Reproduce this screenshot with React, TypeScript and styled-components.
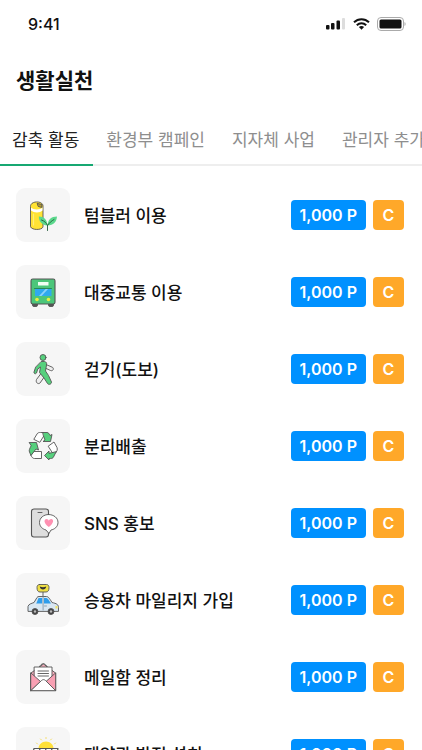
import React, { useState } from "react";
import styled, { createGlobalStyle } from "styled-components";

const GlobalStyle = createGlobalStyle`
  * { box-sizing: border-box; }
  html { overflow-x: hidden; scrollbar-width: none; }
  body {
    margin: 0;
    background: #fff;
    color: #111;
    font-family: Inter, "Noto Sans CJK KR", sans-serif;
  }
  button { font: inherit; border: 0; background: none; cursor: pointer; }
`;

const Screen = styled.div`
  width: 100%;
  overflow: hidden;
`;

const StatusBar = styled.div`
  display: flex;
  align-items: center;
  justify-content: space-between;
  height: 48px;
  padding: 0 16px 0 28px;
`;

const Clock = styled.time`
  font-size: 16px;
  line-height: 24px;
  font-weight: 500;
`;

const StatusIcons = styled.div`
  display: flex;
  align-items: center;
  gap: 7px;
`;

const Title = styled.h1`
  margin: 0;
  padding: 2px 16px 0;
  font-size: 21px;
  line-height: 62px;
  font-weight: 700;
`;

const TabList = styled.div`
  display: flex;
  height: 54px;
  box-shadow: inset 0 -2px #eee;
  overflow-x: auto;
  scrollbar-width: none;
`;

const Tab = styled.button<{ $active: boolean }>`
  flex: none;
  padding: 4px 14px 0 13px;
  border-bottom: 2px solid ${(p) => (p.$active ? "#16a872" : "transparent")};
  color: ${(p) => (p.$active ? "#222" : "#8e8e8e")};
  font-size: 17px;
  line-height: 24px;
  font-weight: 400;
  white-space: nowrap;

  &:first-child { padding-left: 12px; }
`;

const List = styled.ul`
  display: flex;
  flex-direction: column;
  gap: 23px;
  margin: 0;
  padding: 22px 18px 22px 16px;
  list-style: none;
`;

const Row = styled.li`
  display: flex;
  align-items: center;
`;

const Tile = styled.div`
  display: grid;
  place-items: center;
  flex: none;
  width: 54px;
  height: 54px;
  border-radius: 9px;
  background: #f6f6f6;
`;

const Name = styled.span`
  flex: 1;
  margin-left: 14px;
  padding-top: 2px;
  font-size: 17px;
  line-height: 24px;
  font-weight: 500;
`;

const Badges = styled.div`
  display: flex;
  gap: 7px;
`;

const Badge = styled.span<{ $tone: "point" | "carbon" }>`
  display: grid;
  place-items: center;
  height: 30px;
  padding: 0 9px;
  min-width: 31px;
  border-radius: 4px;
  background: ${(p) => (p.$tone === "point" ? "#0091ff" : "#ffa829")};
  color: #fff;
  font-size: 16px;
  line-height: 20px;
  font-weight: 600;
  white-space: nowrap;
`;

const GREEN = "#56d07d";
const INK = "#555";

const Icon = ({ children }: { children: React.ReactNode }) => (
  <svg width="34" height="34" viewBox="0 0 34 34" fill="none" stroke={INK} strokeWidth="0.9" strokeLinecap="round" strokeLinejoin="round" aria-hidden="true">
    {children}
  </svg>
);

const TumblerIcon = () => (
  <Icon>
    <path d="M4.5 8C4.5 2.5 17 2.5 17 8V28.500C17 32.500 4.5 32.500 4.5 28.500Z" fill="#ffe334" />
    <path d="M5 9.500C7 12 14.500 12 16.500 9.500V12.500C14 15 8 15 5 12.500Z" fill="#fff" stroke="none" />
    <path d="M11.500 5.500L16 6.500L15.500 9.500L12.500 8.500Z" fill="#b99a2a" />
    <path d="M7.500 16V27" stroke="#ffee7a" strokeWidth="1.200" />
    <path d="M21.500 27.500C15 27 13 23 12.800 18.500C18 18.500 21 21.500 21.500 27.500Z" fill="#5bd88c" stroke="none" />
    <path d="M21.500 27.500C22 21.500 25 18.500 31 18.500C30.500 24 27.500 27.500 21.500 27.500Z" fill="#5bd88c" stroke="none" />
    <path d="M15.500 22C18.500 23 20.500 25 21.500 27.500C23 25 25.500 23 28 21.500M21.500 27.500V32.500" stroke="#245c3b" />
  </Icon>
);

const BusIcon = () => (
  <Icon>
    <rect x="6.500" y="27.500" width="5" height="4" rx="1.500" fill="#555" />
    <rect x="22.500" y="27.500" width="5" height="4" rx="1.500" fill="#555" />
    <rect x="5" y="4" width="24" height="25" rx="1.800" fill="#4cc67a" strokeWidth="1.100" />
    <rect x="12" y="7" width="10.500" height="3.500" fill="#effff3" stroke="none" />
    <rect x="9" y="13.500" width="16.500" height="7.500" fill="#2fa9ef" stroke="none" />
    <path d="M13 21L20 13.500H22.500L15.500 21Z" fill="#8bd3fb" stroke="none" />
    <path d="M8.500 13.500H25.500" stroke="#26834b" />
    <circle cx="11" cy="24.500" r="1.800" fill="#e9ef45" stroke="none" />
    <circle cx="22.500" cy="24.500" r="1.800" fill="#e9ef45" stroke="none" />
  </Icon>
);

const WalkIcon = () => (
  <Icon>
    <path d="M20 12.500L26.500 15.300C28.500 17 26.500 19.500 24.500 18.500L18 15.500Z" fill="#eee" />
    <path d="M15 21.500L10.500 27.500C9.300 31 12.500 32.500 14 31L19 24Z" fill="#eee" />
    <path d="M15.500 9.500H18.500C20.300 10 21 11 20.500 13L19.500 19L22.500 23.500L25.500 30C25.500 32.500 22.500 33 21.500 31.500L18 26L13.500 20.500L14.500 15L11.800 17L10.500 21C9.500 22.500 7.500 21.500 8 20L9.500 15.500Z" fill={GREEN} />
    <circle cx="17" cy="5.500" r="3" fill={GREEN} />
  </Icon>
);

const RecycleIcon = () => (
  <Icon>
    <path d="M8 10L11 5C12 3.500 13 3.500 14.500 3.500H17L19 5L14 13Z" fill="#fff" />
    <path d="M17 3.500H21C22.500 3.500 23 4.500 24 6.500L26 5.500L24.500 12.500H17L19 11L17.500 7Z" fill={GREEN} />
    <path d="M22.500 17L28 13L31 18.500C31.800 20.500 31 22.500 29 24.500L26.500 23.500Z" fill="#fff" />
    <path d="M30 23L27.500 28C27 29 26 29.500 24.500 29.500H23V31L18.500 26.500L23 22V24Z" fill={GREEN} />
    <path d="M8 22.500H15.500V29.500H8.500C7 29.500 6 28.500 5 26.500Z" fill="#fff" />
    <path d="M3.500 13.500H10.500L12.500 21L10 20L8 22.500L5 26.500L3.500 23C2.800 21.500 3.500 20 5 17Z" fill={GREEN} />
  </Icon>
);

const PhoneIcon = () => (
  <Icon>
    <rect x="5.500" y="3" width="17" height="28" rx="2.500" fill="#dedede" strokeWidth="1.100" />
    <path d="M12 6.500H16" />
    <path d="M22.500 8.500C28 8.500 32 12 32 16.500C32 21 28 23.500 25 24L23 27.500L20 24C16.500 23 13.500 20.500 13.500 16.500C13.500 12 17.500 8.500 22.500 8.500Z" fill="#fff" />
    <path d="M22.800 21C17 16.800 18 13 20.500 13C21.700 13 22.500 13.800 22.800 14.700C23.200 13.800 24 13 25.200 13C27.700 13 28.500 16.800 22.800 21Z" fill="#ff91b2" stroke="none" />
  </Icon>
);

const CarIcon = () => (
  <Icon>
    <path d="M17 9V14" />
    <path d="M13.500 1.500H20.500C22 1.500 23 2.700 23 4.500C23 7.500 22 9 20 9H14C12 9 11 7.500 11 4.500C11 2.500 12 1.500 13.500 1.500Z" fill="#efdf45" />
    <path d="M13.800 3.500C16 4.500 18 4.500 20.200 3.500C20 7.500 14 7.500 13.800 3.500Z" fill="#333" stroke="none" />
    <path d="M2 28V23.500C2.500 21 5.500 20.500 8 19.500L11 14.500C11.500 13.800 12 13.500 13 13.500H20.500C22 13.500 23 14.500 26 19.500C30.500 20.500 32.500 21.500 32.500 24.500V28Z" fill="#d9e7f2" />
    <path d="M10.500 20L12.500 15H16.200V20.500H10ZM18 15H20.500C22 15.500 23.500 18 25 20.500H18Z" fill="#2f9deb" stroke="none" />
    <path d="M17.100 14V27M18.500 23H20.500" stroke="#8499a8" />
    <circle cx="9" cy="28.500" r="3" fill="#444" />
    <circle cx="25" cy="28.500" r="3" fill="#444" />
    <circle cx="9" cy="28.500" r="1.200" fill="#bbb" stroke="none" />
    <circle cx="25" cy="28.500" r="1.200" fill="#bbb" stroke="none" />
    <path d="M29.500 23H31.500V25.500H29.500Z" fill="#f2e263" stroke="none" />
  </Icon>
);

const MailIcon = () => (
  <Icon>
    <path d="M5 13L17.500 4L29.500 13V30.500H5Z" fill="#f8aebd" />
    <path d="M13.500 7C15 2.500 19.500 2.500 21 7" />
    <path d="M8.500 7H26V22H8.500Z" fill="#fff" />
    <path d="M12 11H22.500M12 13.500H22.500M12 16H22.500" />
    <path d="M5 13L14.500 21.500L5 30.500ZM29.500 13L20 21.500L29.500 30.500Z" fill="#f8a0b3" />
    <path d="M5 30.500L15.500 20.500C17 19.300 18 19.300 19.500 20.500L29.500 30.500Z" fill="#fff" />
  </Icon>
);

const SolarIcon = () => (
  <Icon>
    <path d="M12.500 13C11.500 1.500 28.500 1.500 27.500 13Z" fill="#ffe039" stroke="none" />
    <path d="M10.500 6L11.500 7M14.500 2L15.500 3M20 0.500V1.500M25.500 2L24.500 3M29.500 6L28.500 7" stroke="#f3d955" />
    <path d="M8 11.500H32L28 28H4Z" fill="#fff" strokeWidth="1.200" />
    <path d="M6.500 17H30.500M5.500 22.500H29M14 11.500L10 28M20 11.500L16 28M26 11.500L22 28" strokeWidth="1.200" />
    <path d="M16 28V32M11 32H22" />
  </Icon>
);

const activities = [
  { name: "텀블러 이용", Glyph: TumblerIcon },
  { name: "대중교통 이용", Glyph: BusIcon },
  { name: "걷기(도보)", Glyph: WalkIcon },
  { name: "분리배출", Glyph: RecycleIcon },
  { name: "SNS 홍보", Glyph: PhoneIcon },
  { name: "승용차 마일리지 가입", Glyph: CarIcon },
  { name: "메일함 정리", Glyph: MailIcon },
  { name: "태양광 발전 설치", Glyph: SolarIcon },
];

const tabs = ["감축 활동", "환경부 캠페인", "지자체 사업", "관리자 추가"];

export default function App() {
  const [active, setActive] = useState(0);
  return (
    <Screen>
      <GlobalStyle />
      <StatusBar>
        <Clock>9:41</Clock>
        <StatusIcons>
          <svg width="20" height="12" viewBox="0 0 20 12" fill="#111" aria-hidden="true">
            <rect x="0" y="7" width="3.500" height="4.500" rx="1" />
            <rect x="5" y="5" width="3.500" height="6.500" rx="1" />
            <rect x="10.500" y="2.500" width="3.500" height="9" rx="1" />
            <rect x="16" y="0" width="3" height="11.500" rx="1" fill="#ddd" />
          </svg>
          <svg width="17" height="12" viewBox="0 0 17 12" fill="none" stroke="#111" strokeWidth="2" aria-hidden="true">
            <path d="M1 4.300C5.200 0.200 11.800 0.200 16 4.300" />
            <path d="M3.800 7.200C6.500 4.600 10.500 4.600 13.200 7.200" />
            <path d="M8.500 11.700L5.900 9C7.400 7.700 9.600 7.700 11.100 9Z" fill="#111" stroke="none" />
          </svg>
          <svg width="29" height="14" viewBox="0 0 29 14" aria-hidden="true">
            <rect x="0.500" y="0.500" width="26" height="13" rx="3.500" fill="none" stroke="#aaa" />
            <rect x="2.500" y="2.500" width="22" height="9" rx="1.500" fill="#111" />
            <path d="M27.500 5V9C29 8.500 29 5.500 27.500 5Z" fill="#aaa" />
          </svg>
        </StatusIcons>
      </StatusBar>
      <Title>생활실천</Title>
      <TabList role="tablist">
        {tabs.map((label, i) => (
          <Tab key={label} role="tab" aria-selected={i === active} $active={i === active} onClick={() => setActive(i)}>
            {label}
          </Tab>
        ))}
      </TabList>
      <List>
        {activities.map(({ name, Glyph }) => (
          <Row key={name}>
            <Tile><Glyph /></Tile>
            <Name>{name}</Name>
            <Badges>
              <Badge $tone="point">1,000 P</Badge>
              <Badge $tone="carbon">C</Badge>
            </Badges>
          </Row>
        ))}
      </List>
    </Screen>
  );
}
